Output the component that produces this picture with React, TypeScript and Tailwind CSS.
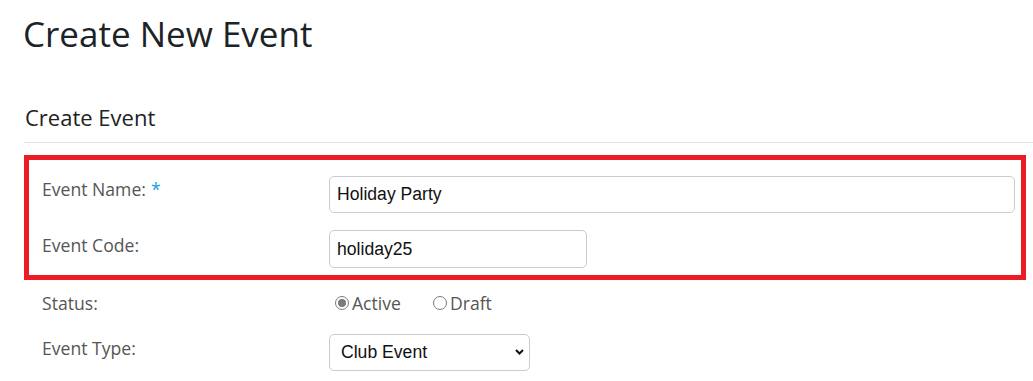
import { useState } from "react";

const OPEN = { fontFamily: '"Open Sans", "Liberation Sans", sans-serif' };
const ARIAL = { fontFamily: '"Liberation Sans", Arial, sans-serif' };

/* ─── Radio ─── */
function Radio({ label, checked, onClick }: { label: string; checked: boolean; onClick: () => void }) {
  return (
    <label className="flex items-center cursor-pointer" onClick={onClick}>
      <span className="w-[14px] h-[14px] rounded-full border border-[#7a7a7a] flex items-center justify-center mr-[3px]">
        {checked && <span className="w-[8px] h-[8px] rounded-full bg-[#7a7a7a]" />}
      </span>
      <span className="text-[17.6px] leading-[24px] text-[#555]" style={OPEN}>
        {label}
      </span>
    </label>
  );
}

function Row({
  label,
  required,
  children,
  className = "",
  labelPad = "pt-[1px]",
}: {
  label: string;
  required?: boolean;
  children: React.ReactNode;
  className?: string;
  labelPad?: string;
}) {
  return (
    <div className={`flex items-start ${className}`}>
      <div className={`w-[287px] shrink-0 ${labelPad} text-[17.6px] leading-[24px] text-[#555]`} style={OPEN}>
        {label}
        {required && <span className="text-[#1a9fe0] ml-[5px]">*</span>}
      </div>
      <div className="flex-1 min-w-0">{children}</div>
    </div>
  );
}

export default function App() {
  const [status, setStatus] = useState("active");

  return (
    <div className="w-[1033px] h-[381px] overflow-hidden bg-white pl-[24px] pt-[10px]">
      <h1 className="-ml-[1px] text-[35px] leading-[48px] text-[#1c2327] font-normal" style={OPEN}>
        Create New Event
      </h1>

      <h2
        className="mt-[44px] pl-[1px] pb-[10px] border-b border-[#e3e3e3] text-[22px] leading-[30px] text-[#222]"
        style={OPEN}
      >
        Create Event
      </h2>

      {/* ─── highlighted fields ─── */}
      <div className="mt-[12px] mr-[7px] border-[5px] border-[#ec1c24] pl-[13px] pr-[6px] pt-[16px] pb-[7px]">
        <Row label="Event Name:" required>
          <input
            defaultValue="Holiday Party"
            className="w-full h-[37px] px-[7px] border border-[#cccccc] rounded-[5px] text-[17.6px] text-[#111] outline-none"
            style={ARIAL}
          />
        </Row>
        <Row label="Event Code:" className="mt-[17px]" labelPad="pt-[3px]">
          <input
            defaultValue="holiday25"
            className="w-[258px] h-[38px] px-[7px] border border-[#cccccc] rounded-[5px] text-[17.6px] text-[#111] outline-none"
            style={ARIAL}
          />
        </Row>
      </div>

      <div className="pl-[18px] pt-[10px]">
        <Row label="Status:">
          <div className="flex items-center pl-[6px] pt-[1px] gap-[12px]">
            <Radio label="Active" checked={status === "active"} onClick={() => setStatus("active")} />
            <span className="w-[8px]" />
            <Radio label="Draft" checked={status === "draft"} onClick={() => setStatus("draft")} />
          </div>
        </Row>
        <Row label="Event Type:" className="mt-[19px]" labelPad="pt-[2px]">
          <div className="relative w-[201px] h-[37px]">
            <select
              defaultValue="club"
              className="appearance-none w-full h-full pl-[11px] border border-[#cccccc] rounded-[5px] bg-white text-[17.6px] text-[#111] outline-none"
              style={ARIAL}
            >
              <option value="club">Club Event</option>
              <option value="public">Public Event</option>
            </select>
            <svg
              className="absolute right-[6px] top-[15px] pointer-events-none"
              width="9"
              height="6"
              viewBox="0 0 9 6"
            >
              <path d="M1 1l3.5 3.5L8 1" stroke="#111" strokeWidth="2" fill="none" />
            </svg>
          </div>
        </Row>
      </div>
    </div>
  );
}
